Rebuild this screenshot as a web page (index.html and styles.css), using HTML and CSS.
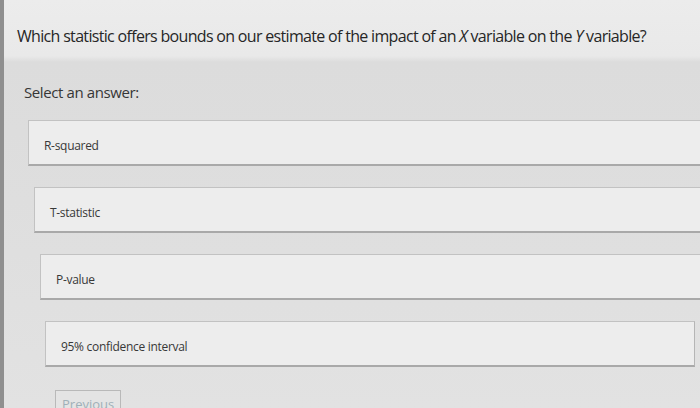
FILE: index.html
```html
<!DOCTYPE html>
<html>
<head>
<meta charset="utf-8">
<link rel="stylesheet" href="styles.css">
</head>
<body>
<div class="page">
  <div class="header">
    <h1 class="question">Which statistic offers bounds on our estimate of the impact of an <i>X</i> variable on the <i>Y</i> variable?</h1>
  </div>
  <div class="content">
    <div class="prompt">Select an answer:</div>
    <div class="options">
      <div class="option o1">R-squared</div>
      <div class="option o2">T-statistic</div>
      <div class="option o3">P-value</div>
      <div class="option o4">95% confidence interval</div>
    </div>
    <div class="nav">
      <button class="prev">Previous</button>
    </div>
  </div>
</div>
</body>
</html>
```
FILE: styles.css
```css
html, body {
  margin: 0;
  padding: 0;
}
body {
  width: 700px;
  height: 408px;
  overflow: hidden;
  background: #dedede;
  font-family: "Open Sans", "Noto Sans", sans-serif;
  color: #2a2a2a;
}
.page {
  border-left: 4px solid #8f8f8f;
  height: 408px;
  box-sizing: border-box;
  background: linear-gradient(180deg, #ececec 0px, #e9e9e9 56px, #dcdcdc 62px, #dedede 200px, #e2e2e2 408px);
}
.header {
  height: 58px;
  padding: 24px 0 0 13px;
  box-sizing: border-box;
}
.question {
  margin: 0;
  font-size: 16px;
  font-weight: 400;
  letter-spacing: -0.68px;
  color: #262626;
  line-height: 24px;
}
.question i {
  font-style: italic;
}
.content {
  padding-left: 20px;
}
.prompt {
  margin-top: 24px;
  font-size: 15px;
  letter-spacing: -0.4px;
  color: #363636;
  line-height: 20px;
}
.options {
  margin-top: 18px;
  display: flex;
  flex-direction: column;
  gap: 21px;
}
.option {
  height: 46px;
  box-sizing: border-box;
  background: #ededed;
  border: 1px solid #c2c2c2;
  border-bottom: 2px solid #a9a9a9;
  border-right: none;
  display: flex;
  align-items: center;
  padding: 5px 0 0 15px;
  font-size: 12px;
  letter-spacing: -0.3px;
  color: #383838;
}
.o1 { margin-left: 4px; }
.o2 { margin-left: 10px; }
.o3 { margin-left: 16px; }
.o4 { margin-left: 21px; margin-right: 5px; border-right: 1px solid #b5b5b5; }
.nav {
  margin-top: 23px;
  padding-left: 31px;
}
.prev {
  font-family: "Open Sans", "Noto Sans", sans-serif;
  font-size: 13px;
  color: #9fb0b8;
  background: #e4e4e4;
  border: 1px solid #b9b9b9;
  padding: 4px 6px;
}
```
